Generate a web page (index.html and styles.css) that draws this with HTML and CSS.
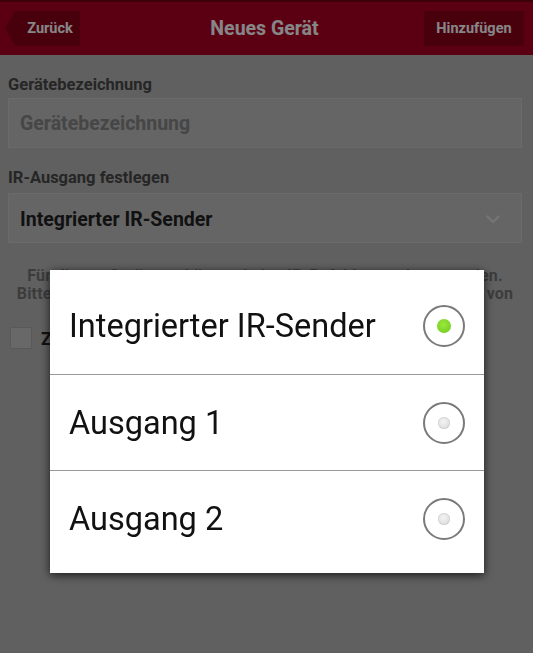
FILE: index.html
```html
<!DOCTYPE html>
<html lang="de">
<head>
  <meta charset="UTF-8">
  <title>Neues Gerät</title>
  <link rel="stylesheet" href="styles.css">
</head>
<body>
<!-- Kopfzeile -->
<header class="topbar">
  <button class="bar-button back-button">Zurück</button>
  <h1 class="topbar-title">Neues Gerät</h1>
  <button class="bar-button add-button">Hinzufügen</button>
</header>

<!-- Formular -->
<main class="form">
  <label class="field-label" for="device-name">Gerätebezeichnung</label>
  <input class="text-input" id="device-name" type="text" placeholder="Gerätebezeichnung">

  <label class="field-label">IR-Ausgang festlegen</label>
  <div class="select-box">
    <span class="select-value">Integrierter IR-Sender</span>
    <svg class="chevron" width="14" height="9" viewBox="0 0 14 9">
      <path d="M1.5 1.5 L7 7 L12.5 1.5" fill="none" stroke="currentColor" stroke-width="2.4" stroke-linecap="round" stroke-linejoin="round"/>
    </svg>
  </div>

  <p class="note">
    Für diesen Gerätetyp können keine IR-Befehle angelernt werden.<br>
    Bitte wählen Sie den gewünschten IR-Ausgang für dieses Gerät von
  </p>

  <div class="check-row">
    <span class="check-box"></span>
    <span class="check-label">Zu Favoriten hinzufügen</span>
  </div>
</main>

<!-- Auswahl-Dialog -->
<div class="overlay">
  <div class="dialog">
    <div class="dialog-row">
      <span>Integrierter IR-Sender</span>
      <span class="radio checked"></span>
    </div>
    <div class="dialog-row">
      <span>Ausgang 1</span>
      <span class="radio"></span>
    </div>
    <div class="dialog-row">
      <span>Ausgang 2</span>
      <span class="radio"></span>
    </div>
  </div>
</div>
</body>
</html>
```

FILE: styles.css
```css
body {
  margin: 0;
  padding: 0;
  font-family: Roboto, "Liberation Sans", sans-serif;
  background-color: #afafaf;
  height: 653px;
  overflow: hidden;
}

/* Kopfzeile */
.topbar {
  display: grid;
  grid-template-columns: 1fr auto 1fr;
  align-items: center;
  height: 53px;
  padding: 0 9px 0 5px;
  background-color: #a70024;
  border-top: 2px solid #6d0012;
}
.topbar-title {
  margin: 0;
  font-size: 19.5px;
  font-weight: bold;
  color: #f5f5f5;
}
.bar-button {
  height: 35px;
  border: none;
  background-color: #830019;
  color: #f5f5f5;
  font-family: inherit;
  font-size: 14.5px;
  font-weight: bold;
  padding: 0 11px;
}
.back-button {
  justify-self: start;
  width: 75px;
  padding-left: 19px;
  padding-right: 4px;
  clip-path: polygon(10px 0, 100% 0, 100% 100%, 10px 100%, 0 50%);
}
.add-button {
  justify-self: end;
  width: 100px;
  padding: 0 8px;
}

/* Formular */
.form {
  display: flex;
  flex-direction: column;
  padding: 20px 11px 0 8px;
}
.field-label {
  font-size: 16.5px;
  font-weight: bold;
  color: #454545;
  margin-bottom: 4px;
}
.text-input {
  height: 50px;
  box-sizing: border-box;
  border: 1px solid #c2c2c2;
  background-color: #b8b8b8;
  padding: 0 11px;
  font-family: inherit;
  font-size: 19.5px;
  font-weight: bold;
  margin-bottom: 20px;
}
.text-input::placeholder {
  color: #808080;
}
.select-box {
  display: flex;
  justify-content: space-between;
  align-items: center;
  height: 50px;
  box-sizing: border-box;
  margin-top: 2px;
  border: 1px solid #c2c2c2;
  background-color: #b8b8b8;
  padding: 2px 21px 0 11px;
}
.select-value {
  font-size: 19.5px;
  font-weight: bold;
  color: #1f1f1f;
}
.chevron {
  color: #d6d6d6;
}
.note {
  margin: 24px 0 0;
  text-align: center;
  font-size: 16px;
  font-weight: bold;
  line-height: 18px;
  letter-spacing: 0.2px;
  color: #6e6e6e;
}
.check-row {
  display: flex;
  align-items: center;
  gap: 9px;
  margin-top: 24px;
  padding-left: 2px;
}
.check-box {
  width: 20px;
  height: 20px;
  border: 1px solid #a3a3a3;
  background-color: #bdbdbd;
}
.check-label {
  font-size: 18px;
  font-weight: bold;
  color: #1f1f1f;
}

/* Abdunkelung und Dialog */
.overlay {
  position: fixed;
  inset: 0;
  background-color: rgba(0, 0, 0, 0.45);
  display: flex;
  justify-content: center;
  align-items: flex-start;
  padding-top: 270px;
}
.dialog {
  width: 434px;
  margin-left: 1px;
  padding: 8px 0 7px;
  background-color: #fff;
  box-shadow: 0 2px 9px rgba(0, 0, 0, 0.75);
}
.dialog-row {
  display: flex;
  justify-content: space-between;
  align-items: center;
  height: 96px;
  box-sizing: border-box;
  padding: 0 19px;
  font-size: 32.5px;
  color: #111;
}
.dialog-row + .dialog-row {
  border-top: 1.5px solid #9a9a9a;
}
.radio {
  width: 38px;
  height: 38px;
  border: 2px solid #7a7a7a;
  border-radius: 50%;
  display: flex;
  align-items: center;
  justify-content: center;
}
.radio::after {
  content: "";
  width: 12px;
  height: 12px;
  border-radius: 50%;
  background: radial-gradient(circle at 45% 40%, #f4f4f4, #d4d4d4);
  box-shadow: inset 0 0 1px rgba(0, 0, 0, 0.3);
}
.radio.checked::after {
  width: 14px;
  height: 14px;
  background: radial-gradient(circle at 45% 40%, #9be83c, #6cc81a);
  box-shadow: none;
}
```
